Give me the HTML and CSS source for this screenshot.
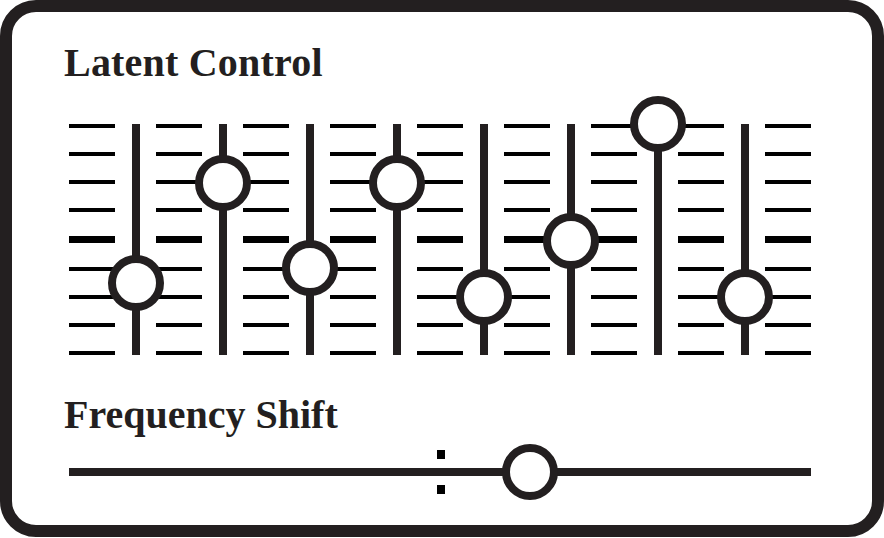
FILE: index.html
```html
<!DOCTYPE html>
<html>
<head>
<meta charset="utf-8">
<link rel="stylesheet" href="styles.css">
</head>
<body>
<div class="card">
  <h1 class="title title-latent">Latent Control</h1>
  <div class="bank">
    <div class="ticks"><i></i><i></i><i></i><i></i><i class="major"></i><i></i><i></i><i></i><i></i></div>
    <div class="track"><span class="knob" style="top:159px"></span></div>
    <div class="ticks"><i></i><i></i><i></i><i></i><i class="major"></i><i></i><i></i><i></i><i></i></div>
    <div class="track"><span class="knob" style="top:58.5px"></span></div>
    <div class="ticks"><i></i><i></i><i></i><i></i><i class="major"></i><i></i><i></i><i></i><i></i></div>
    <div class="track"><span class="knob" style="top:144px"></span></div>
    <div class="ticks"><i></i><i></i><i></i><i></i><i class="major"></i><i></i><i></i><i></i><i></i></div>
    <div class="track"><span class="knob" style="top:58.5px"></span></div>
    <div class="ticks"><i></i><i></i><i></i><i></i><i class="major"></i><i></i><i></i><i></i><i></i></div>
    <div class="track"><span class="knob" style="top:172.5px"></span></div>
    <div class="ticks"><i></i><i></i><i></i><i></i><i class="major"></i><i></i><i></i><i></i><i></i></div>
    <div class="track"><span class="knob" style="top:117px"></span></div>
    <div class="ticks"><i></i><i></i><i></i><i></i><i class="major"></i><i></i><i></i><i></i><i></i></div>
    <div class="track"><span class="knob" style="top:0px"></span></div>
    <div class="ticks"><i></i><i></i><i></i><i></i><i class="major"></i><i></i><i></i><i></i><i></i></div>
    <div class="track"><span class="knob" style="top:173px"></span></div>
    <div class="ticks"><i></i><i></i><i></i><i></i><i class="major"></i><i></i><i></i><i></i><i></i></div>
  </div>
  <h2 class="title title-freq">Frequency Shift</h2>
  <div class="hslider">
    <div class="hline"></div>
    <span class="center-mark"><b></b><b></b></span>
    <span class="knob hknob" style="left:461px"></span>
  </div>
</div>
</body>
</html>
```

FILE: styles.css
```css
html, body {
  margin: 0;
  padding: 0;
  background: #ffffff;
}

.card {
  box-sizing: border-box;
  width: 884px;
  height: 537px;
  border: 12px solid #231f20;
  border-radius: 36px;
  background: #ffffff;
  padding: 0 61px 0 52px;
  display: flex;
  flex-direction: column;
}

.title {
  margin: 0;
  font-family: "Liberation Serif", "Times New Roman", serif;
  font-weight: bold;
  font-size: 40px;
  line-height: 40px;
  color: #231f20;
  letter-spacing: 0;
}

.title-latent {
  margin-top: 30.5px;
  letter-spacing: 0.2px;
}

.title-freq {
  margin-top: 39.5px;
}

.bank {
  margin-top: 41.5px;
  margin-left: 5px;
  height: 231px;
  display: flex;
  gap: 16.5px;
}

.ticks {
  width: 46px;
  display: flex;
  flex-direction: column;
  justify-content: space-between;
}

.ticks i {
  display: block;
  height: 4px;
  background: #000000;
}

.ticks i.major {
  height: 7px;
}

.track {
  position: relative;
  width: 8px;
  background: #231f20;
}

.knob {
  position: absolute;
  left: 50%;
  width: 56px;
  height: 56px;
  box-sizing: border-box;
  border: 8px solid #231f20;
  border-radius: 50%;
  background: #ffffff;
  transform: translate(-50%, -50%);
}

.hslider {
  position: relative;
  margin-top: 9.5px;
  margin-left: 5px;
  width: 742px;
  height: 56px;
  display: flex;
  align-items: center;
}

.hline {
  width: 100%;
  height: 8px;
  background: #231f20;
}

.center-mark {
  position: absolute;
  left: 368px;
  top: 6px;
  width: 8px;
  height: 44px;
  display: flex;
  flex-direction: column;
  justify-content: space-between;
}

.center-mark b {
  display: block;
  height: 9px;
  background: #000000;
}

.hknob {
  top: 28px;
}
```
